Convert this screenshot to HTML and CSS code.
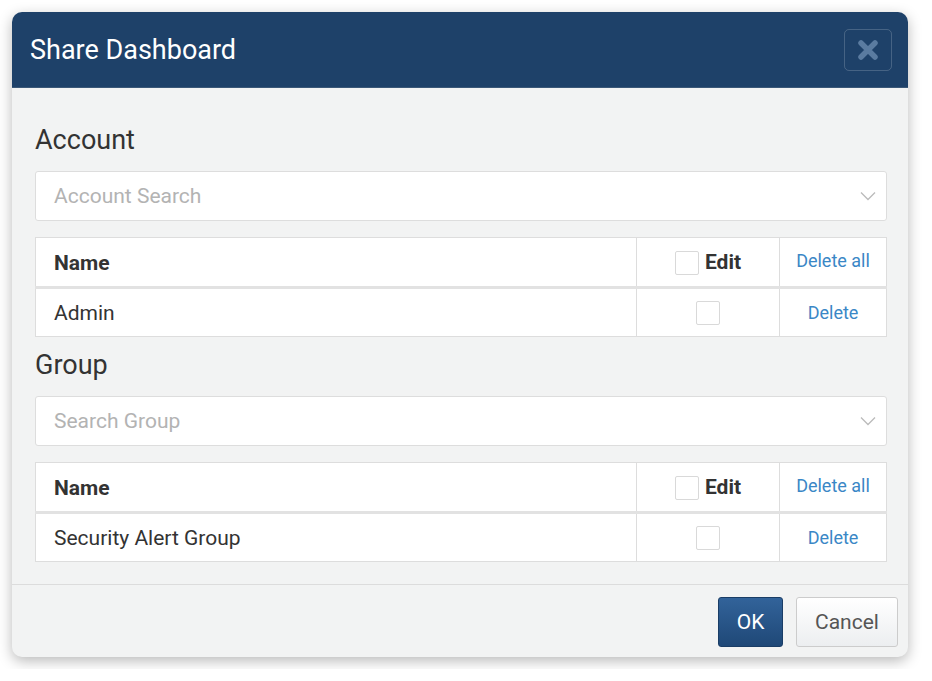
FILE: index.html
```html
<!DOCTYPE html>
<html>
	<head>
		<meta charset="UTF-8">
		<title>Share Dashboard</title>
		<link rel="stylesheet" href="styles.css">
	</head>
	<body>
		<div class="modal">
			<div class="modal-header">
				<h3>Share Dashboard</h3>
				<a href="javascript:;" class="close">
					<svg width="22" height="22" viewBox="0 0 22 22"><path d="M4 4L18 18M18 4L4 18" stroke="#5a7ba0" stroke-width="5.5" stroke-linecap="round"/></svg>
				</a>
			</div>
			<div class="modal-body">
				<h4>Account</h4>
				<div class="select">
					<span>Account Search</span>
					<svg width="16" height="10" viewBox="0 0 16 10"><path d="M1 1.5L8 8.5L15 1.5" fill="none" stroke="#bbb" stroke-width="1.3"/></svg>
				</div>
				<table>
					<tr>
						<th class="name">Name</th>
						<th class="edit"><span class="check"></span>Edit</th>
						<th class="del"><a href="javascript:;">Delete all</a></th>
					</tr>
					<tr>
						<td class="name">Admin</td>
						<td class="edit"><span class="check"></span></td>
						<td class="del"><a href="javascript:;">Delete</a></td>
					</tr>
				</table>
				<h4>Group</h4>
				<div class="select">
					<span>Search Group</span>
					<svg width="16" height="10" viewBox="0 0 16 10"><path d="M1 1.5L8 8.5L15 1.5" fill="none" stroke="#bbb" stroke-width="1.3"/></svg>
				</div>
				<table>
					<tr>
						<th class="name">Name</th>
						<th class="edit"><span class="check"></span>Edit</th>
						<th class="del"><a href="javascript:;">Delete all</a></th>
					</tr>
					<tr>
						<td class="name">Security Alert Group</td>
						<td class="edit"><span class="check"></span></td>
						<td class="del"><a href="javascript:;">Delete</a></td>
					</tr>
				</table>
			</div>
			<div class="modal-footer">
				<a href="javascript:;" class="btn ok">OK</a>
				<a href="javascript:;" class="btn cancel">Cancel</a>
			</div>
		</div>
	</body>
</html>
```

FILE: styles.css
```css
*{
	margin: 0;
	padding: 0;
	box-sizing: border-box;
}
body{
	background: #fff;
	padding: 12px;
	font-family: Roboto, "Liberation Sans", sans-serif;
	color: #333;
}
a{
	text-decoration: none;
}
.modal{
	width: 896px;
	background: #f2f3f3;
	border-radius: 10px;
	box-shadow: 0 4px 14px rgba(0,0,0,.28);
	overflow: hidden;
}
.modal-header{
	height: 76px;
	background: #1e4169;
	display: flex;
	align-items: center;
	justify-content: space-between;
	padding: 0 16px 0 18px;
	border-bottom: 1px solid #3b5878;
}
.modal-header h3{
	color: #fff;
	font-size: 27px;
	font-weight: 400;
}
.close{
	width: 48px;
	height: 42px;
	border: 1px solid rgba(255,255,255,.18);
	border-radius: 5px;
	display: flex;
	align-items: center;
	justify-content: center;
}
.modal-body{
	padding: 37px 21px 22px 23px;
	border-bottom: 1px solid #dcdcdc;
}
.modal-body h4{
	font-size: 27px;
	font-weight: 400;
	line-height: 30px;
	margin-bottom: 16px;
}
.modal-body table + h4{
	margin-top: 13px;
}
.select{
	height: 50px;
	background: #fff;
	border: 1px solid #ddd;
	border-radius: 3px;
	display: flex;
	align-items: center;
	justify-content: space-between;
	padding: 0 10px 0 18px;
	font-size: 21px;
	color: #b3b3b3;
	margin-bottom: 16px;
}
table{
	width: 100%;
	border-collapse: collapse;
	background: #fff;
	font-size: 21px;
}
th, td{
	border: 1px solid #ddd;
	height: 49px;
	vertical-align: middle;
}
th{
	height: 50px;
	border-bottom: 3px solid #e2e2e2;
	font-weight: 700;
	padding-top: 2px;
}
.name{
	text-align: left;
	padding-left: 18px;
}
.edit{
	width: 143px;
	text-align: center;
}
.del{
	width: 107px;
	text-align: center;
	font-weight: 400;
	font-size: 18px;
}
.del a{
	color: #3a87c6;
}
th.del a{
	position: relative;
	top: -3px;
}
.check{
	display: inline-block;
	width: 24px;
	height: 24px;
	border: 1px solid #d9d9d9;
	border-radius: 2px;
	background: #fff;
	vertical-align: middle;
}
th .check{
	margin-right: 6px;
	position: relative;
	top: -1px;
}
.modal-footer{
	display: flex;
	justify-content: flex-end;
	gap: 13px;
	padding: 12px 10px 10px;
}
.btn{
	height: 50px;
	display: flex;
	align-items: center;
	justify-content: center;
	font-size: 21px;
	border-radius: 3px;
}
.ok{
	width: 65px;
	color: #fff;
	background: linear-gradient(#32639a, #1f4877);
	border: 1px solid #1a3d66;
}
.cancel{
	width: 102px;
	color: #555;
	background: linear-gradient(#fff, #eceef0);
	border: 1px solid #ccc;
}
```
